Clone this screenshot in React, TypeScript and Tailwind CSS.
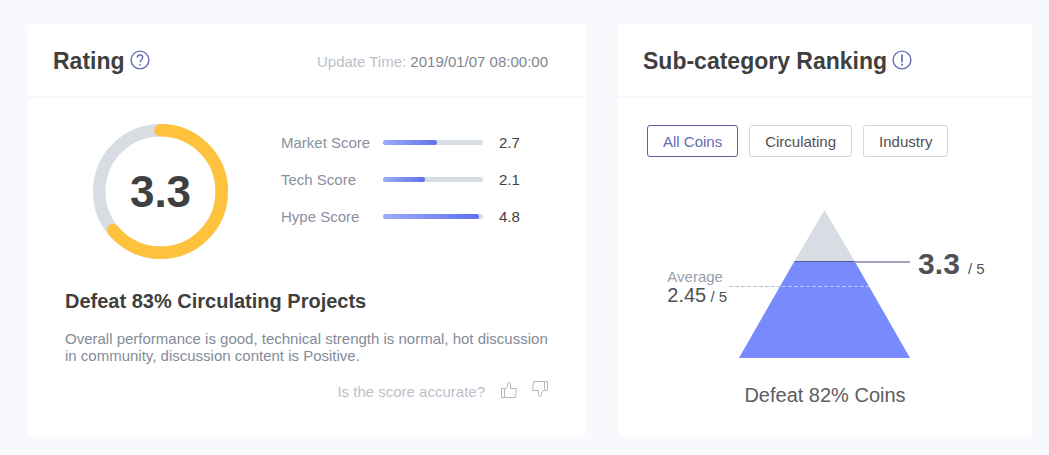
import type { ReactNode } from 'react';

interface Score {
  label: string;
  value: number;
}

const MAX_SCORE = 5;

const scores: Score[] = [
  { label: 'Market Score', value: 2.7 },
  { label: 'Tech Score', value: 2.1 },
  { label: 'Hype Score', value: 4.8 },
];

const tabs = ['All Coins', 'Circulating', 'Industry'];

const HelpIcon = () => (
  <svg width="20" height="20" viewBox="0 0 20 20" fill="none" stroke="#6a6fb5" strokeWidth="1.4" aria-hidden="true">
    <circle cx="10" cy="10" r="8.9" />
    <path d="M7.3 7.7C7.3 6 8.4 5 10 5s2.7 1 2.7 2.5c0 2-2.6 2.2-2.6 4.8" />
    <path d="M10.1 13.9v1.7" />
  </svg>
);

const NoticeIcon = () => (
  <svg width="20" height="20" viewBox="0 0 20 20" fill="none" stroke="#6a6fb5" strokeWidth="1.4" aria-hidden="true">
    <circle cx="10" cy="10" r="8.9" />
    <path d="M10 4.4v7.9M10 13.8v1.8" strokeWidth="1.8" />
  </svg>
);

const ThumbIcon = ({ down = false }: { down?: boolean }) => (
  <svg
    width="16"
    height="16"
    viewBox="0 0 16 16"
    fill="none"
    stroke="#b4b7c3"
    strokeLinejoin="round"
    className={down ? 'rotate-180' : ''}
    aria-hidden="true"
  >
    <path d="M.5 6.5h3v9h-3z" />
    <path d="M3.5 7.5L6 5.2 6.8 1.3C7 .3 9.3.2 9.5 1.9V6.5h6l-1 9h-11" />
  </svg>
);

const Gauge = ({ value }: { value: number }) => {
  const length = 2 * Math.PI * 61.25;
  return (
    <div className="grid h-[135px] w-[135px] shrink-0 place-items-center">
      <svg width="135" height="135" viewBox="0 0 135 135" fill="none" strokeWidth="12.5" className="col-start-1 row-start-1">
        <circle cx="67.5" cy="67.5" r="61.25" stroke="#d8dde4" />
        <circle
          cx="67.5"
          cy="67.5"
          r="61.25"
          stroke="#ffc23c"
          strokeLinecap="round"
          strokeDasharray={`${(length * value * 0.97) / MAX_SCORE} ${length}`}
          transform="rotate(-90 67.5 67.5)"
        />
      </svg>
      <span className="col-start-1 row-start-1 text-[44px] leading-none font-bold">{value}</span>
    </div>
  );
};

const ScoreRow = ({ label, value }: Score) => (
  <li className="flex items-center">
    <span className="w-[102px] text-[#8b90a0]">{label}</span>
    <span className="h-[5px] w-[100px] rounded-full bg-[#d8dde2]">
      <span
        className="block h-full rounded-full bg-linear-to-r from-[#9dabfb] to-[#6170ee]"
        style={{ width: `${(value / MAX_SCORE) * 100}%` }}
      />
    </span>
    <span className="ml-4">{value}</span>
  </li>
);

const Card = ({ title, icon, extra, children }: { title: string; icon: ReactNode; extra?: ReactNode; children: ReactNode }) => (
  <section className="flex flex-col rounded-sm bg-white">
    <header className="flex h-[74px] items-center border-b-2 border-[#f6f8fa] pt-0.5 pr-[38px] pl-[25px]">
      <h2 className="mr-[5px] text-[23px] leading-7 font-bold">{title}</h2>
      <span className="mb-[3px]">{icon}</span>
      {extra}
    </header>
    {children}
  </section>
);

const Pyramid = () => (
  <svg width="181" height="148" viewBox="0 0 181 148" aria-hidden="true">
    <path d="M95.5 0L125.5 51H65.5z" fill="#d8dde4" />
    <path d="M65.5 51h60L181 148H10z" fill="#788afc" />
    <path d="M65.5 51.5h60" stroke="#5157a0" />
    <path d="M125.5 52H181" stroke="#a2a4c6" strokeWidth="2" />
    <path d="M0 76.5h53" stroke="#b4bbcc" strokeDasharray="4 2" />
    <path d="M53 76.5h87" stroke="#bfc8ff" strokeDasharray="4 2" />
  </svg>
);

export default function App() {
  return (
    <main className="grid min-h-screen grid-cols-[558fr_414fr] items-start gap-8 bg-[#f7f9fc] pt-6 pr-[17px] pb-[19px] pl-7 font-['Liberation_Sans',Arial,sans-serif] text-[15px] leading-[17px] text-[#3f3f40] [&>section]:min-h-[412px]">
      <Card
        title="Rating"
        icon={<HelpIcon />}
        extra={
          <p className="ml-auto text-[#bcbfca]">
            Update Time: <time className="text-[#80858f]">2019/01/07 08:00:00</time>
          </p>
        }
      >
        <div className="flex pt-[26px] pl-[65px]">
          <Gauge value={3.3} />
          <ul className="ml-[53px] flex flex-col gap-5 pt-2.5">
            {scores.map((score) => (
              <ScoreRow key={score.label} {...score} />
            ))}
          </ul>
        </div>

        <div className="pt-[30px] pr-[38px] pl-[37px]">
          <h3 className="text-xl leading-6 font-bold">Defeat 83% Circulating Projects</h3>
          <p className="mt-[17px] text-[#858b98]">
            Overall performance is good, technical strength is normal, hot discussion in community, discussion content is Positive.
          </p>
          <div className="mt-[17px] flex items-start justify-end text-[#bcbfca]">
            <span className="mt-0.5">Is the score accurate?</span>
            <button type="button" aria-label="Yes" className="mt-px ml-4">
              <ThumbIcon />
            </button>
            <button type="button" aria-label="No" className="ml-[15px]">
              <ThumbIcon down />
            </button>
          </div>
        </div>
      </Card>

      <Card title="Sub-category Ranking" icon={<NoticeIcon />}>
        <div className="flex gap-[11px] pt-[27px] pl-[29px]">
          {tabs.map((tab, index) => (
            <button
              key={tab}
              type="button"
              aria-pressed={index === 0}
              className={`h-8 rounded-[3px] border px-[15px] ${
                index === 0 ? 'border-[#5a5f9f] text-[#656bb3]' : 'border-[#d3d5d8] text-[#505155]'
              }`}
            >
              {tab}
            </button>
          ))}
        </div>

        <div className="mt-[53px] flex items-start justify-center pl-0.5 text-[#505155]">
          <div className="mt-[58px] mr-0.5 whitespace-nowrap">
            <div className="text-[#989dac]">Average</div>
            <div className="leading-6">
              <span className="text-xl leading-5">2.45</span> / 5
            </div>
          </div>
          <Pyramid />
          <div className="mt-9 ml-2 whitespace-nowrap">
            <span className="mr-1 text-3xl font-bold">3.3</span> / 5
          </div>
        </div>
        <p className="mt-[25px] text-center text-xl leading-6 text-[#5c5d62]">Defeat 82% Coins</p>
      </Card>
    </main>
  );
}
